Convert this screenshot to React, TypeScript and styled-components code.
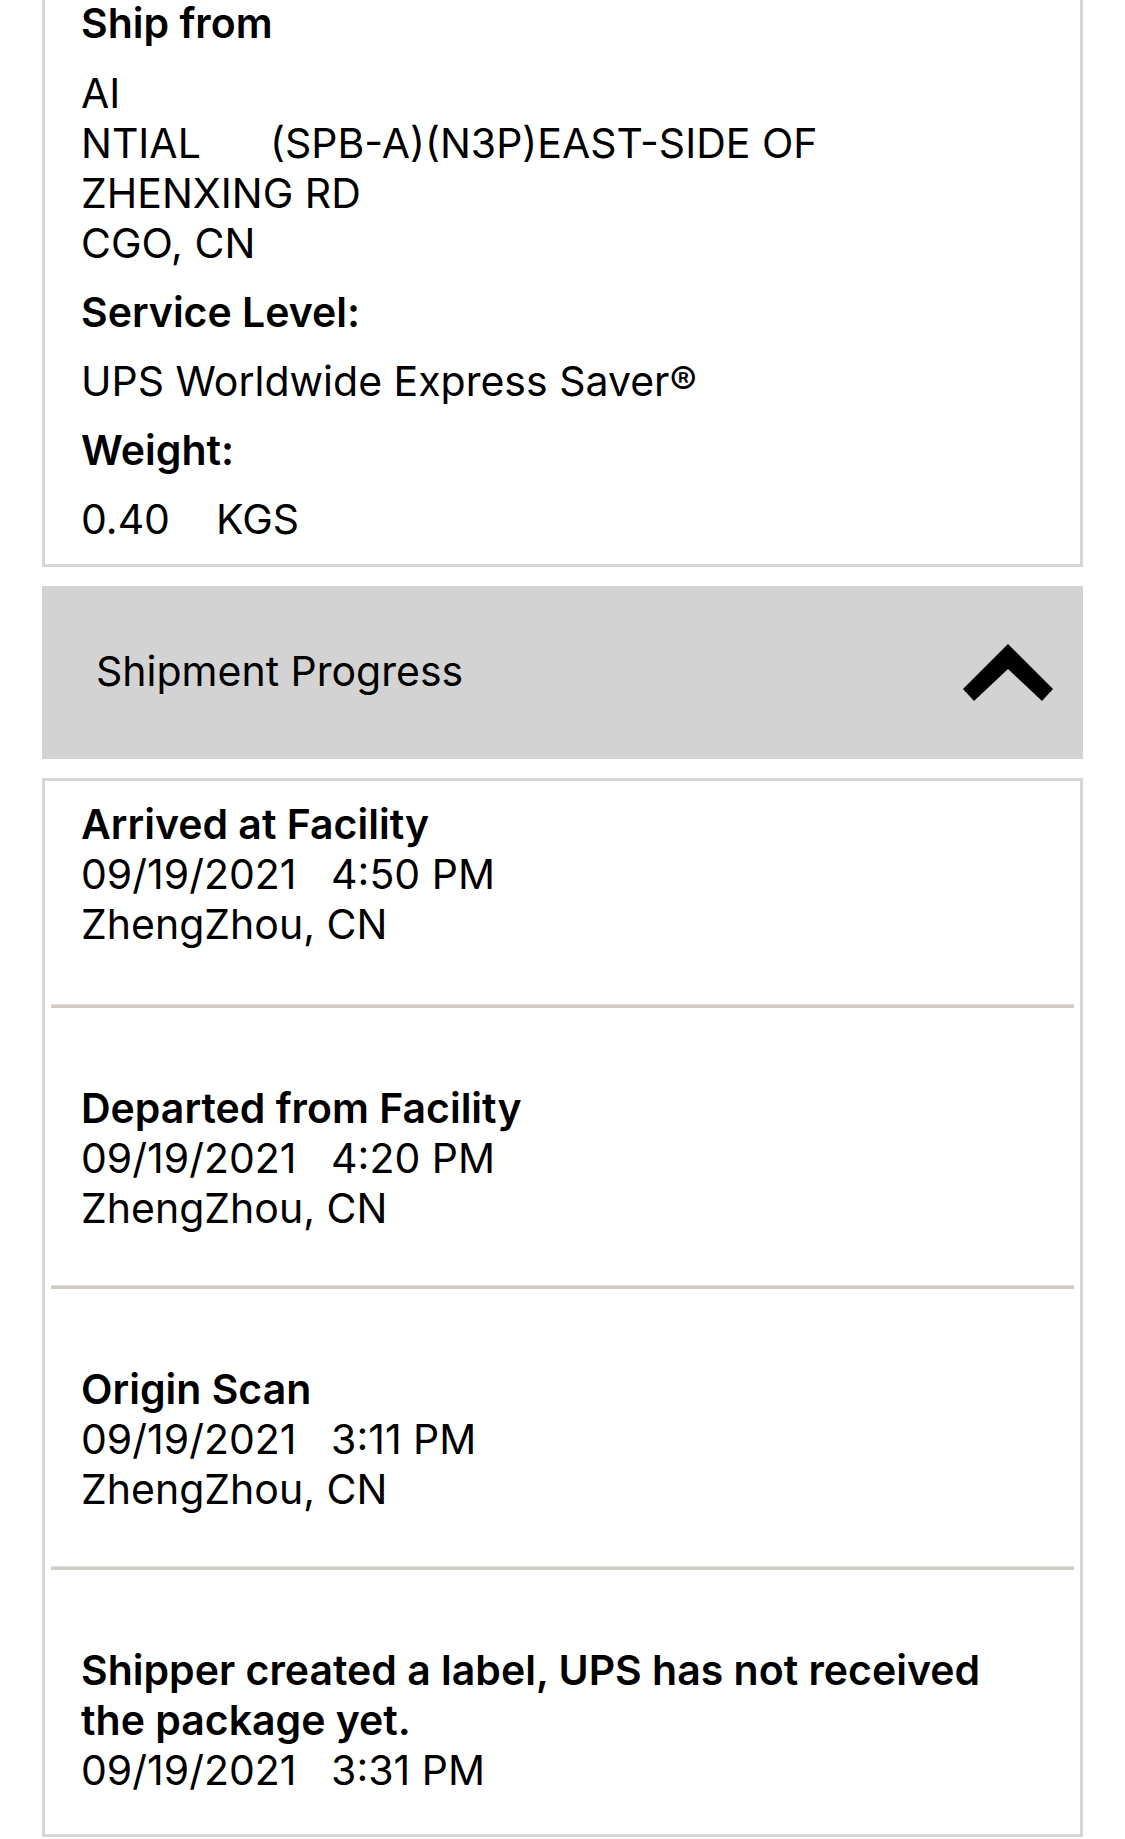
import React from "react";
import styled, { createGlobalStyle } from "styled-components";

const GlobalStyle = createGlobalStyle`
  html, body {
    margin: 0;
    padding: 0;
    background: #ffffff;
  }
  body {
    font-family: Inter, "Liberation Sans", Arial, sans-serif;
    color: #000000;
    -webkit-font-smoothing: antialiased;
  }
`;

const Page = styled.div`
  display: flex;
  flex-direction: column;
  gap: 19px;
  padding: 0 42px;
  width: 1125px;
  box-sizing: border-box;
`;

const DetailsCard = styled.section`
  border: 3px solid #d6d6d6;
  border-top: none;
  background: #ffffff;
  padding: 0 36px 20px 36px;
  display: flex;
  flex-direction: column;
  gap: 19px;
`;

const Label = styled.div<{ $lead?: boolean }>`
  font-size: 41px;
  line-height: ${(p) => (p.$lead ? "46px" : "50px")};
  margin-bottom: ${(p) => (p.$lead ? "3px" : "0")};
  font-weight: 600;
  white-space: pre-wrap;
`;

const Value = styled.div`
  font-size: 41px;
  line-height: 50px;
  font-weight: 400;
  white-space: pre-wrap;
`;

const ProgressHeader = styled.button`
  all: unset;
  box-sizing: border-box;
  display: flex;
  align-items: center;
  justify-content: space-between;
  height: 173px;
  padding: 0 30px 0 54px;
  background: #d3d3d3;
  cursor: pointer;
`;

const HeaderTitle = styled.span`
  font-size: 41px;
  line-height: 50px;
  padding-bottom: 4px;
  font-weight: 400;
  color: #000;
`;

const Chevron = styled.svg`
  width: 90px;
  height: 57px;
  display: block;
  flex-shrink: 0;
`;

const EventsCard = styled.section`
  border: 3px solid #d6d6d6;
  background: #ffffff;
  padding: 0 6px;
  display: flex;
  flex-direction: column;
`;

const EventItem = styled.div<{ $top: number; $bottom: number }>`
  padding: ${(p) => p.$top}px 46px ${(p) => p.$bottom}px 30px;
  display: flex;
  flex-direction: column;
`;

const EventTitle = styled.div`
  font-size: 41px;
  line-height: 50px;
  font-weight: 600;
`;

const EventLine = styled.div`
  font-size: 41px;
  line-height: 50px;
  font-weight: 400;
  white-space: pre-wrap;
`;

const Divider = styled.div`
  height: 4px;
  background: #d0cbc5;
  border-top: 1px solid #e2dfdb;
  box-sizing: border-box;
`;

type ShipEvent = {
  title: string;
  date: string;
  time: string;
  place?: string;
};

const events: ShipEvent[] = [
  { title: "Arrived at Facility", date: "09/19/2021", time: "4:50 PM", place: "ZhengZhou, CN" },
  { title: "Departed from Facility", date: "09/19/2021", time: "4:20 PM", place: "ZhengZhou, CN" },
  { title: "Origin Scan", date: "09/19/2021", time: "3:11 PM", place: "ZhengZhou, CN" },
  { title: "Shipper created a label, UPS has not received the package yet.", date: "09/19/2021", time: "3:31 PM" },
];

const addressLines = ["AI", "NTIAL      (SPB-A)(N3P)EAST-SIDE OF", "ZHENXING RD", "CGO, CN"];

function spacing(i: number, count: number) {
  if (i === 0) return { top: 18, bottom: 55 };
  if (i === count - 1) return { top: 75, bottom: 39 };
  return { top: 75, bottom: 52 };
}

export default function App() {
  return (
    <>
      <GlobalStyle />
      <Page>
        <DetailsCard>
          <Label $lead>Ship from</Label>
          <Value>{addressLines.join("\n")}</Value>
          <Label>Service Level:</Label>
          <Value>UPS Worldwide Express Saver®</Value>
          <Label>Weight:</Label>
          <Value>{"0.40    KGS"}</Value>
        </DetailsCard>

        <ProgressHeader type="button" aria-expanded="true">
          <HeaderTitle>Shipment Progress</HeaderTitle>
          <Chevron viewBox="0 0 90 57" aria-hidden="true">
            <polygon points="45,0 90,45 79,57 45,25 11,57 0,45" fill="#000" />
          </Chevron>
        </ProgressHeader>

        <EventsCard>
          {events.map((ev, i) => {
            const last = i === events.length - 1;
            const s = spacing(i, events.length);
            return (
              <React.Fragment key={ev.title}>
                <EventItem $top={s.top} $bottom={s.bottom}>
                  <EventTitle>{ev.title}</EventTitle>
                  <EventLine>{`${ev.date}   ${ev.time}`}</EventLine>
                  {ev.place && <EventLine>{ev.place}</EventLine>}
                </EventItem>
                {!last && <Divider />}
              </React.Fragment>
            );
          })}
        </EventsCard>
      </Page>
    </>
  );
}
